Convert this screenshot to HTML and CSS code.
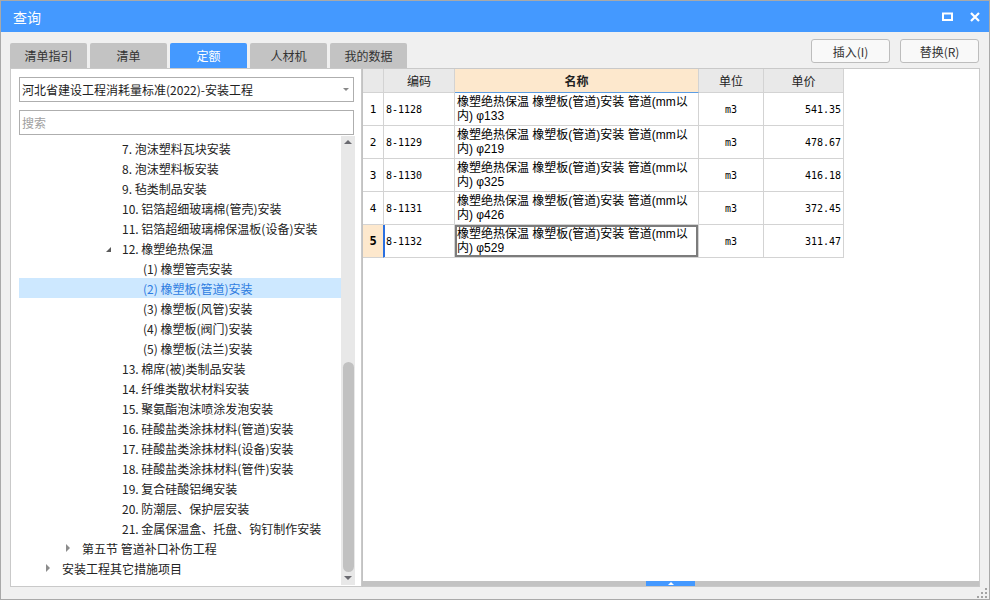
FILE: index.html
```html
<!DOCTYPE html>
<html lang="zh">
<head>
<meta charset="utf-8">
<title>查询</title>
<link rel="stylesheet" href="styles.css">
</head>
<body>
<div class="win">
  <div class="titlebar">
    <span class="title">查询</span>
    <div class="ctrls">
      <svg class="ic-max" width="11" height="9" viewBox="0 0 11 9"><rect x="1" y="1.5" width="9" height="6.5" fill="none" stroke="#fff" stroke-width="2"/></svg>
      <svg class="ic-close" width="10" height="10" viewBox="0 0 10 10"><path d="M1 1L9 9M9 1L1 9" stroke="#fff" stroke-width="2.2"/></svg>
    </div>
  </div>

  <div class="toprow">
    <div class="tabs">
      <div class="tab">清单指引</div>
      <div class="tab">清单</div>
      <div class="tab active">定额</div>
      <div class="tab">人材机</div>
      <div class="tab">我的数据</div>
    </div>
    <div class="btns">
      <button class="btn">插入(I)</button>
      <button class="btn">替换(R)</button>
    </div>
  </div>

  <div class="main">
    <div class="left">
      <div class="select">
        <span>河北省建设工程消耗量标准(2022)-安装工程</span>
        <span class="caret"></span>
      </div>
      <div class="search">搜索</div>
      <div class="treewrap">
        <div class="tree">
          <div class="row l3">7. 泡沫塑料瓦块安装</div>
          <div class="row l3">8. 泡沫塑料板安装</div>
          <div class="row l3">9. 毡类制品安装</div>
          <div class="row l3">10. 铝箔超细玻璃棉(管壳)安装</div>
          <div class="row l3">11. 铝箔超细玻璃棉保温板(设备)安装</div>
          <div class="row l3x"><span class="tri-open"></span>12. 橡塑绝热保温</div>
          <div class="row l4">(1) 橡塑管壳安装</div>
          <div class="row l4 sel">(2) 橡塑板(管道)安装</div>
          <div class="row l4">(3) 橡塑板(风管)安装</div>
          <div class="row l4">(4) 橡塑板(阀门)安装</div>
          <div class="row l4">(5) 橡塑板(法兰)安装</div>
          <div class="row l3">13. 棉席(被)类制品安装</div>
          <div class="row l3">14. 纤维类散状材料安装</div>
          <div class="row l3">15. 聚氨酯泡沫喷涂发泡安装</div>
          <div class="row l3">16. 硅酸盐类涂抹材料(管道)安装</div>
          <div class="row l3">17. 硅酸盐类涂抹材料(设备)安装</div>
          <div class="row l3">18. 硅酸盐类涂抹材料(管件)安装</div>
          <div class="row l3">19. 复合硅酸铝绳安装</div>
          <div class="row l3">20. 防潮层、保护层安装</div>
          <div class="row l3">21. 金属保温盒、托盘、钩钉制作安装</div>
          <div class="row l2"><span class="tri-closed"></span>第五节 管道补口补伤工程</div>
          <div class="row l1"><span class="tri-closed"></span>安装工程其它措施项目</div>
        </div>
        <div class="vscroll">
          <span class="arr-up"></span>
          <span class="thumb"></span>
          <span class="arr-down"></span>
        </div>
      </div>
    </div>

    <div class="right">
      <div class="grid">
        <div class="h c-num"></div>
        <div class="h">编码</div>
        <div class="h h-name">名称</div>
        <div class="h">单位</div>
        <div class="h">单价</div>

        <div class="c c-num">1</div>
        <div class="c c-code">8-1128</div>
        <div class="c c-name"><span class="ln">橡塑绝热保温 橡塑板(管道)安装 管道(mm以</span><span class="ln">内) φ133</span></div>
        <div class="c c-unit">m3</div>
        <div class="c c-price">541.35</div>

        <div class="c c-num">2</div>
        <div class="c c-code">8-1129</div>
        <div class="c c-name"><span class="ln">橡塑绝热保温 橡塑板(管道)安装 管道(mm以</span><span class="ln">内) φ219</span></div>
        <div class="c c-unit">m3</div>
        <div class="c c-price">478.67</div>

        <div class="c c-num">3</div>
        <div class="c c-code">8-1130</div>
        <div class="c c-name"><span class="ln">橡塑绝热保温 橡塑板(管道)安装 管道(mm以</span><span class="ln">内) φ325</span></div>
        <div class="c c-unit">m3</div>
        <div class="c c-price">416.18</div>

        <div class="c c-num">4</div>
        <div class="c c-code">8-1131</div>
        <div class="c c-name"><span class="ln">橡塑绝热保温 橡塑板(管道)安装 管道(mm以</span><span class="ln">内) φ426</span></div>
        <div class="c c-unit">m3</div>
        <div class="c c-price">372.45</div>

        <div class="c c-num cur">5</div>
        <div class="c c-code cur-code">8-1132</div>
        <div class="c c-name focus"><span class="ln">橡塑绝热保温 橡塑板(管道)安装 管道(mm以</span><span class="ln">内) φ529</span></div>
        <div class="c c-unit">m3</div>
        <div class="c c-price">311.47</div>
      </div>
      <div class="hscroll"><span class="hthumb"><span class="harr"></span></span></div>
    </div>
  </div>

  <div class="bottom">
    <svg width="10" height="10" viewBox="0 0 10 10" fill="#a3a3a3">
      <rect x="8" y="0" width="2" height="2"/>
      <rect x="4" y="4" width="2" height="2"/><rect x="8" y="4" width="2" height="2"/>
      <rect x="0" y="8" width="2" height="2"/><rect x="4" y="8" width="2" height="2"/><rect x="8" y="8" width="2" height="2"/>
    </svg>
  </div>
</div>
</body>
</html>
```

FILE: styles.css
```css
* { box-sizing: border-box; margin: 0; padding: 0; }

body {
  width: 990px;
  height: 600px;
  overflow: hidden;
  font-family: "Noto Sans CJK SC", "Microsoft YaHei", sans-serif;
  font-size: 12px;
  color: #222;
  background: #f0f0f0;
}

.win {
  width: 990px;
  height: 600px;
  border: 1px solid #a9a9a9;
  background: #f0f0f0;
  display: flex;
  flex-direction: column;
}

.titlebar {
  height: 31px;
  flex: none;
  background: #4499ff;
  color: #fff;
  display: flex;
  align-items: center;
  justify-content: space-between;
  padding: 0 9px 0 12px;
}
.title { font-size: 14px; line-height: 1; }
.ctrls { display: flex; align-items: center; gap: 17px; }
.ic-max { display: block; }
.ic-close { display: block; }

.toprow {
  height: 36px;
  flex: none;
  display: flex;
  justify-content: space-between;
  padding: 0 10px 0 9px;
}
.tabs { display: flex; gap: 3px; align-self: flex-end; }
.tab {
  width: 77px;
  height: 25px;
  background: #c3c3c3;
  border-radius: 2px 2px 0 0;
  color: #333;
  display: flex;
  align-items: center;
  justify-content: center;
}
.tab.active { background: #4499ff; color: #fff; }

.btns { display: flex; gap: 10px; padding-top: 7px; }
.btn {
  width: 79px;
  height: 24px;
  border: 1px solid #bdbdbd;
  border-radius: 3px;
  background: #f9f9f9;
  font: inherit;
  color: #333;
}

.main {
  height: 519px;
  flex: none;
  display: flex;
  padding: 0 9px;
}

.left {
  width: 352px;
  flex: none;
  border: 1px solid #c9c9c9;
  background: #fff;
  display: flex;
  flex-direction: column;
  padding: 8px 0 0 8px;
}
.select {
  width: 335px;
  height: 25px;
  border: 1px solid #aeaeae;
  display: flex;
  align-items: center;
  justify-content: space-between;
  padding: 0 4px 0 2px;
  color: #222;
}
.caret {
  width: 0; height: 0;
  border-left: 3px solid transparent;
  border-right: 3px solid transparent;
  border-top: 3px solid #888;
}
.search {
  margin-top: 8px;
  width: 335px;
  height: 25px;
  border: 1px solid #aeaeae;
  padding-left: 2px;
  color: #a0a0a0;
  display: flex;
  align-items: center;
}

.treewrap {
  margin-top: 1px;
  flex: 1;
  display: flex;
  padding-bottom: 1px;
}
.tree { width: 322px; padding-top: 2px; }
.row {
  height: 20px;
  display: flex;
  align-items: center;
  white-space: nowrap;
  color: #222;
}
.l1 { padding-left: 27px; }
.l2 { padding-left: 47px; }
.l3 { padding-left: 103px; }
.l3x { padding-left: 87px; }
.l4 { padding-left: 124px; }
.sel { background: #cde8ff; color: #2f7de1; }

.tri-open {
  width: 0; height: 0;
  border-left: 5px solid transparent;
  border-bottom: 5px solid #5a5a5a;
  margin-right: 11px;
  margin-top: 2px;
}
.tri-closed {
  width: 0; height: 0;
  border-top: 4px solid transparent;
  border-bottom: 4px solid transparent;
  border-left: 4px solid #8c8c8c;
  margin-right: 12px;
}

.vscroll {
  width: 14px;
  background: #e8e8e8;
  display: flex;
  flex-direction: column;
  align-items: center;
}
.arr-up {
  margin-top: 4px;
  width: 0; height: 0;
  border-left: 4px solid transparent;
  border-right: 4px solid transparent;
  border-bottom: 4px solid #6a6a70;
}
.thumb {
  margin-top: 218px;
  width: 11px;
  height: 210px;
  border-radius: 6px;
  background: #c1c1c1;
}
.arr-down {
  margin-top: 4px;
  width: 0; height: 0;
  border-left: 4px solid transparent;
  border-right: 4px solid transparent;
  border-top: 4px solid #6a6a70;
}

.right {
  flex: 1;
  border: 1px solid #c9c9c9;
  border-left: 1px solid #c2c2c2;
  background: #fff;
  display: flex;
  flex-direction: column;
}
.grid {
  flex: 1;
  display: grid;
  grid-template-columns: 21px 71px 244px 65px 80px;
  grid-auto-rows: 33px;
  grid-template-rows: 24px;
  align-content: start;
  color: #000;
}
.h, .c {
  border-right: 1px solid #d3d3d3;
  border-bottom: 1px solid #d3d3d3;
}
.h {
  background: #e9e9e9;
  display: flex;
  align-items: center;
  justify-content: center;
  color: #222;
}
.h-name {
  background: #fde8cd;
  font-weight: bold;
  border-bottom: 1px solid #5b9de3;
}
.c { display: flex; align-items: center; }
.c-num {
  justify-content: center;
  font-family: "DejaVu Sans Mono", "Liberation Mono", monospace;
  font-size: 11px;
}
.c-code {
  padding-left: 2px;
  font-family: "DejaVu Sans Mono", "Liberation Mono", monospace;
  font-size: 10px;
}
.c-name {
  display: flex;
  flex-direction: column;
  align-items: flex-start;
  padding: 2px 2px 0 2px;
  white-space: nowrap;
  font-family: "Liberation Sans", "Noto Sans CJK SC", sans-serif;
  font-size: 12px;
}
.ln {
  display: block;
  height: 14px;
  line-height: 14px;
}
.c-unit {
  justify-content: center;
  font-family: "DejaVu Sans Mono", "Liberation Mono", monospace;
  font-size: 10px;
}
.c-price {
  justify-content: flex-end;
  padding-right: 2px;
  font-family: "DejaVu Sans Mono", "Liberation Mono", monospace;
  font-size: 10px;
}
.cur {
  background: #fde8cd;
  font-weight: bold;
  font-size: 12px;
  border-right: 1px solid #2a6fe0;
}
.cur-code { box-shadow: inset 1px 0 0 #2a6fe0; }
.focus { box-shadow: inset 0 0 0 2px #7c7c7c; }

.hscroll {
  height: 5px;
  flex: none;
  background: #c3c3c3;
  display: flex;
  padding-left: 283px;
}
.hthumb {
  width: 49px;
  height: 5px;
  background: #4499ff;
  display: flex;
  justify-content: center;
  align-items: flex-end;
  padding-bottom: 1px;
}
.harr {
  width: 0; height: 0;
  border-left: 3px solid transparent;
  border-right: 3px solid transparent;
  border-bottom: 3px solid #fff;
}

.bottom {
  flex: 1;
  display: flex;
  justify-content: flex-end;
  align-items: flex-end;
  padding: 0 2px 1px 0;
}
```
